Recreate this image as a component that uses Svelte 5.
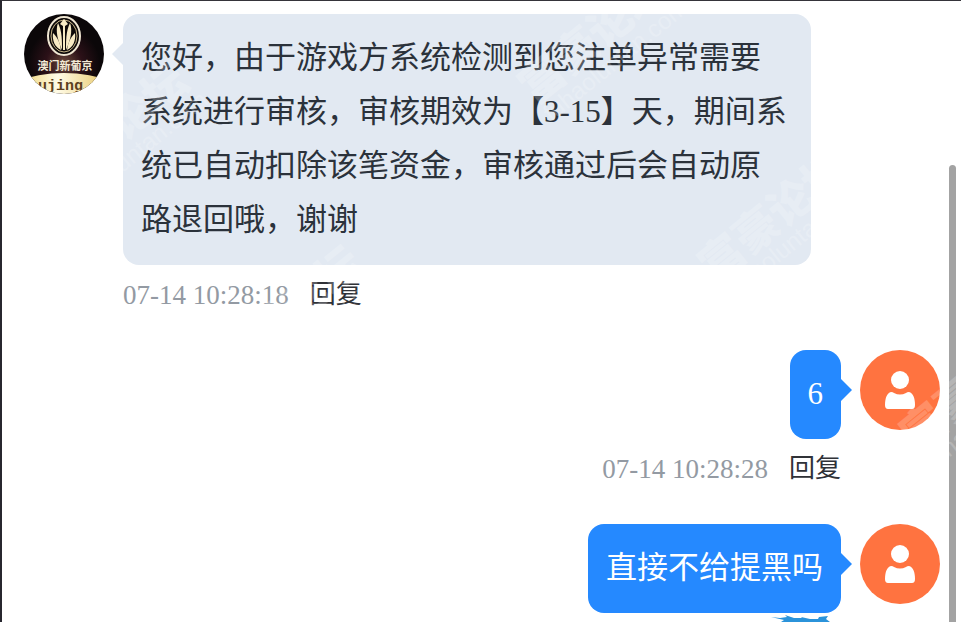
<script>
    const messages = [
        {
            from: 'agent',
            text: '您好，由于游戏方系统检测到您注单异常需要\n系统进行审核，审核期效为【3-15】天，期间系\n统已自动扣除该笔资金，审核通过后会自动原\n路退回哦，谢谢',
            time: '07-14 10:28:18'
        },
        { from: 'user', text: '6', time: '07-14 10:28:28' },
        { from: 'user', text: '直接不给提黑吗' }
    ];

    // centre of the second character of each stamp
    const stamps = [
        { x: 94, y: 142 },
        { x: 574, y: 50 },
        { x: 268, y: 324 },
        { x: 754, y: 229 },
        { x: 956, y: 398 }
    ];
</script>

<main class="chat" lang="zh-CN">
    {#each messages as message}
        <article class="message {message.from}">
            {#if message.from === 'agent'}
                <svg class="avatar" viewBox="0 0 80 80" role="img" aria-label="澳门新葡京">
                    <defs>
                        <clipPath id="logo-clip"><circle cx="40" cy="40" r="40" /></clipPath>
                        <radialGradient id="logo-bg" cx="50%" cy="62%" r="45%">
                            <stop offset="0" stop-color="#6b4a3c" />
                            <stop offset="0.5" stop-color="#2c1118" />
                            <stop offset="1" stop-color="#0b0709" />
                        </radialGradient>
                        <linearGradient id="logo-gold" x1="0" x2="1" y1="0" y2="0">
                            <stop offset="0.2" stop-color="#efd67e" />
                            <stop offset="0.45" stop-color="#fffbe6" />
                            <stop offset="0.8" stop-color="#e9cb72" />
                        </linearGradient>
                    </defs>
                    <g clip-path="url(#logo-clip)">
                        <rect width="80" height="80" fill="url(#logo-bg)" />
                        <ellipse cx="40" cy="22" rx="16" ry="19" fill="#0d0908" stroke="#efe6d2" stroke-width="2" />
                        <ellipse cx="40" cy="22" rx="13" ry="16" fill="none" stroke="#c9b88c" stroke-width="1" />
                        <g fill="#f8ebc4">
                            <path d="M40 5l4 5-3 2v24h-2V12l-3-2z" />
                            <path d="M34 9c-3 8 0 18 4 27 0-10 0-19-4-27z" />
                            <path d="M46 9c3 8 0 18-4 27 0-10 0-19 4-27z" />
                            <path d="M29 19c-1 8 2 14 8 17-1-8-4-13-8-17z" />
                            <path d="M51 19c1 8-2 14-8 17 1-8 4-13 8-17z" />
                        </g>
                        <text class="logo-name" x="41" y="56" text-anchor="middle">澳门新葡京</text>
                        <ellipse cx="40" cy="88" rx="66" ry="29" fill="url(#logo-gold)" />
                        <text class="logo-site" x="5" y="76">oujing.cc</text>
                    </g>
                </svg>
            {:else}
                <svg class="avatar" viewBox="0 0 80 80" role="img" aria-label="用户">
                    <circle cx="40" cy="40" r="40" fill="#ff7340" />
                    <circle cx="40" cy="30" r="9" fill="#fff" />
                    <path
                        fill="#fff"
                        d="M31 42q2 0 3 1 6 3 12 0 1-1 3-1c4 1 6 6 6 13q0 4-3 4H28q-3 0-3-4c0-7 2-12 6-13z"
                    />
                </svg>
            {/if}

            <div class="body">
                <p class="bubble">{message.text}</p>
                {#if message.time}
                    <footer class="meta">
                        <time>{message.time}</time>
                        <button type="button">回复</button>
                    </footer>
                {/if}
            </div>
        </article>
    {/each}

    <div class="thumb"></div>

    <svg class="scribble" viewBox="0 0 60 7" aria-hidden="true">
        <path
            fill="#2b93da"
            d="M0 2l9 1 7-1-2-2 9 3 8 0-1-1 9 2 8 0 1-2 9-1-2 3 4 3H10l3-2z"
        />
    </svg>

    <svg class="watermark" aria-hidden="true">
        {#each stamps as stamp}
            <g transform="translate({stamp.x} {stamp.y}) rotate(-39)">
                <text class="stamp-name" x="-66" y="16">富豪论坛</text>
                <text class="stamp-site" x="-64" y="40">fuhaoluntan.com</text>
            </g>
        {/each}
    </svg>
</main>

<style>
    :global(body) {
        margin: 0;
        background: #fff;
    }

    .chat {
        position: relative;
        box-sizing: border-box;
        min-height: 100vh;
        display: flex;
        flex-direction: column;
        gap: 41px;
        padding: 13px 21px 8px 22px;
        border-top: 1px solid #35343a;
        border-left: 2px solid #27262e;
        overflow: hidden;
        font-family: 'Liberation Serif', 'Noto Sans CJK SC', sans-serif;
    }

    .message {
        display: flex;
        align-items: flex-start;
        gap: 19px;
    }

    .message.user {
        flex-direction: row-reverse;
    }

    .avatar {
        width: 80px;
        height: 80px;
        flex-shrink: 0;
    }

    .logo-name {
        font-family: 'Noto Sans CJK SC', sans-serif;
        font-size: 11px;
        font-weight: bold;
        fill: #f3ead6;
    }

    .logo-site {
        font-family: 'Liberation Mono', monospace;
        font-size: 15px;
        font-weight: bold;
        fill: #5d401d;
    }

    .body {
        display: flex;
        flex-direction: column;
        align-items: flex-start;
        gap: 16px;
    }

    .agent .body {
        flex: 1;
        max-width: 688px;
    }

    .user .body {
        align-items: flex-end;
    }

    .bubble {
        position: relative;
        box-sizing: border-box;
        margin: 0;
        padding: 17px 18px 18px;
        border-radius: 16px;
        font-size: 31px;
        line-height: 54px;
        white-space: pre-line;
    }

    .agent .bubble {
        width: 100%;
        background: #e2e9f2;
        color: #2b323b;
    }

    .user .bubble {
        background: #2589ff;
        color: #fff;
    }

    .bubble::before {
        content: '';
        position: absolute;
        top: 29px;
        border: 11px solid transparent;
    }

    .agent .bubble::before {
        right: 100%;
        border-left-width: 0;
        border-right-color: #e2e9f2;
    }

    .user .bubble::before {
        left: 100%;
        border-right-width: 0;
        border-left-color: #2589ff;
    }

    .meta {
        display: flex;
        align-items: center;
        gap: 21px;
        height: 28px;
        line-height: 28px;
    }

    .meta time {
        font-size: 27px;
        color: #939aa3;
    }

    .meta button {
        padding: 0;
        border: none;
        background: none;
        font: inherit;
        font-size: 26px;
        line-height: 28px;
        color: #303238;
        cursor: pointer;
    }

    .thumb {
        position: absolute;
        top: 164px;
        right: 5px;
        bottom: 0;
        width: 7px;
        border-radius: 4px 4px 0 0;
        background: #a3a3a3;
    }

    .scribble {
        position: absolute;
        right: 130px;
        bottom: 0;
        width: 60px;
        height: 7px;
    }

    .watermark {
        position: absolute;
        top: 0;
        left: 0;
        width: 100%;
        height: 100%;
        fill: #fff;
        opacity: 0.2;
        pointer-events: none;
    }

    .stamp-name {
        font-family: 'Noto Sans CJK SC', sans-serif;
        font-size: 44px;
        font-weight: 900;
    }

    .stamp-site {
        font-family: 'Liberation Sans', sans-serif;
        font-size: 24px;
    }
</style>
